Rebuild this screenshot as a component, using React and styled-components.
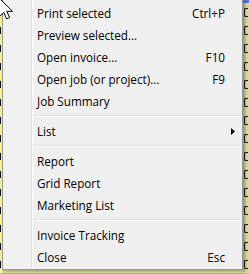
import React from "react";
import styled, { createGlobalStyle } from "styled-components";

const Global = createGlobalStyle`
  html, body { margin: 0; padding: 0; }
  body { width: 249px; height: 274px; overflow: hidden; font-family: "Segoe UI", "Open Sans", "Noto Sans", sans-serif; }
`;

const Stage = styled.div`
  position: relative;
  width: 249px;
  height: 274px;
  overflow: hidden;
  background: #ffffff;
`;

const Sheet = styled.div`
  display: flex;
  flex-direction: column;
`;

const TopBar = styled.div`
  height: 3px;
  background: #3d7fd6;
`;

const SheetRow = styled.div`
  display: grid;
  grid-template-columns: 4px 1fr 6px;
  height: 18px;
  background: #f4f29a;
`;

const LeftCell = styled.div`
  display: flex;
  align-items: center;
  justify-content: flex-end;
  padding-right: 2px;
  border-right: 1px solid #c9c78a;
  &::before {
    content: "";
    width: 1px;
    height: 7px;
    background: #111;
  }
`;

const MidCell = styled.div``;

const RightCell = styled.div`
  display: flex;
  align-items: center;
  padding-left: 1px;
  background: #dedb98;
  &::before {
    content: "";
    width: 3px;
    height: 7px;
    border: 1px solid #111;
    border-right: none;
    border-radius: 2px 0 0 2px;
  }
`;

const FooterRow = styled.div`
  height: 18px;
  background: #fff;
  border-top: 1px solid #b8b88a;
  display: flex;
  gap: 3px;
  padding-left: 14px;
  padding-top: 3px;
`;

const FooterMark = styled.div`
  width: 1px;
  height: 8px;
  background: #111;
  margin-left: ${(p) => p.$gap || 0}px;
`;

const Menu = styled.div`
  position: absolute;
  left: 2px;
  top: -1px;
  width: 239px;
  padding: 2px 0 1px 0;
  border: 1px solid #979797;
  box-shadow: 2px 2px 3px rgba(0, 0, 0, 0.35);
  background:
    linear-gradient(to right,
      #f1f1f1 0, #f1f1f1 28px,
      #e2e3e3 28px, #e2e3e3 29px,
      #ffffff 29px, #ffffff 30px,
      #f0f0f0 30px, #f0f0f0 100%);
  display: flex;
  flex-direction: column;
  font-family: "Segoe UI", "Open Sans", "Noto Sans", sans-serif;
  font-size: 11.7px;
  color: #000;
`;

const Item = styled.div`
  display: flex;
  align-items: center;
  height: 22px;
  padding-left: 34px;
  padding-right: ${(p) => (p.$sub ? "7px" : "17px")};
  white-space: nowrap;
`;

const Label = styled.span`
  flex: 1;
`;

const Shortcut = styled.span`
  text-align: right;
`;

const Separator = styled.div`
  height: 8px;
  display: flex;
  flex-direction: column;
  justify-content: center;
  padding-left: 30px;
  padding-right: 1px;
  &::before {
    content: "";
    display: block;
    height: 1px;
    background: #e0e0e0;
  }
  &::after {
    content: "";
    display: block;
    height: 1px;
    background: #ffffff;
  }
`;

const Cursor = styled.svg`
  position: absolute;
  left: -2px;
  top: -3px;
`;

const Arrow = () => (
  <svg width="4" height="7" viewBox="0 0 4 7">
    <path d="M0 0 L4 3.5 L0 7 Z" fill="#000" />
  </svg>
);

const groups = [
  [
    ["Print selected", "Ctrl+P"],
    ["Preview selected...", ""],
    ["Open invoice...", "F10"],
    ["Open job (or project)...", "F9"],
    ["Job Summary", ""],
  ],
  [["List", "", true]],
  [
    ["Report", ""],
    ["Grid Report", ""],
    ["Marketing List", ""],
  ],
  [
    ["Invoice Tracking", ""],
    ["Close", "Esc"],
  ],
];

const sheetRows = Array.from({ length: 15 });
const footerGaps = [0, 2, 0, 6, 0, 0, 0, 0];

export default function App() {
  return (
    <Stage>
      <Global />
      <Sheet>
        <TopBar />
        {sheetRows.map((_, i) => (
          <SheetRow key={i}>
            <LeftCell />
            <MidCell />
            <RightCell />
          </SheetRow>
        ))}
        <FooterRow>
          {footerGaps.map((g, i) => (
            <FooterMark key={i} $gap={g} />
          ))}
        </FooterRow>
      </Sheet>
      <Menu>
        {groups.map((g, gi) => (
          <React.Fragment key={gi}>
            {gi > 0 && <Separator />}
            {g.map(([label, sc, sub]) => (
              <Item key={label} $sub={sub}>
                <Label>{label}</Label>
                {sub ? <Arrow /> : <Shortcut>{sc}</Shortcut>}
              </Item>
            ))}
          </React.Fragment>
        ))}
      </Menu>
      <Cursor width="16" height="24" viewBox="0 0 16 24">
        <path
          d="M1.5 1.5 L1.5 19.5 L5.8 15.4 L8.6 21.8 L11.6 20.5 L8.8 14.3 L14.5 14.3 Z"
          fill="#fff"
          stroke="#000"
          strokeWidth="1"
          strokeLinejoin="miter"
        />
      </Cursor>
    </Stage>
  );
}
